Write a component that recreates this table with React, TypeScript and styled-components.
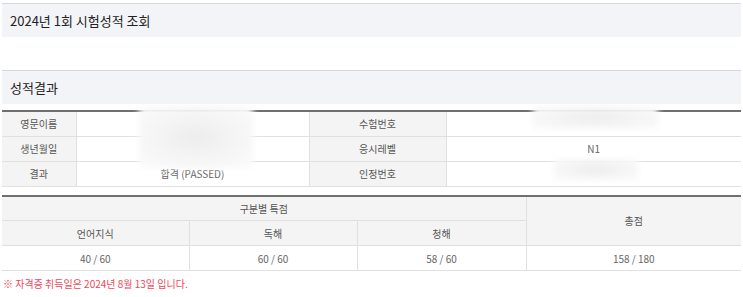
import React from "react";
import styled, { createGlobalStyle } from "styled-components";

const Global = createGlobalStyle`
  html, body { margin: 0; padding: 0; background: #fff; }
  body { font-family: "Noto Sans CJK KR", "Noto Sans", sans-serif; color: #333; }
  * { box-sizing: border-box; }
`;

const Page = styled.div`
  position: relative;
  padding: 3px 2px 0;
  width: 743px;
`;

const SectionTitle = styled.h2<{ $gap: number }>`
  margin: 0 0 ${(p) => p.$gap}px;
  height: 34px;
  display: flex;
  align-items: center;
  padding-left: 8px;
  background: #f3f4f8;
  border-top: 1px solid #d6d8de;
  font-size: 13px;
  font-weight: 400;
  color: #222;
`;

const Table = styled.table<{ $gap?: number }>`
  width: 100%;
  border-collapse: collapse;
  table-layout: fixed;
  border-top: 2px solid #6f6f6f;
  margin-bottom: ${(p) => p.$gap ?? 0}px;
  font-size: 10px;
  color: #666;
`;

const Row = styled.tr`
  height: 25px;
`;

const Th = styled.th`
  padding: 0;
  background: #f4f4f4;
  font-weight: 400;
  color: #555;
  border: 1px solid #e0e0e0;
  border-top: none;
  border-left: none;
  text-align: center;
  &:last-child { border-right: none; }
`;

const Td = styled.td`
  padding: 0;
  text-align: center;
  border-bottom: 1px solid #e0e0e0;
  border-right: 1px solid #e0e0e0;
  &:last-child { border-right: none; }
`;

const Note = styled.p`
  margin: 5px 0 0 1px;
  font-size: 10px;
  color: #f0465a;
`;

const Redaction = styled.div`
  position: absolute;
  background: radial-gradient(ellipse at center, #ececec 0%, #f4f4f4 45%, #fbfbfb 100%);
  filter: blur(3px);
`;

const infoRows = [
  ["영문이름", "", "수험번호", ""],
  ["생년월일", "", "응시레벨", "N1"],
  ["결과", "합격 (PASSED)", "인정번호", ""],
];

export default function App() {
  return (
    <>
      <Global />
      <Page>
        <SectionTitle $gap={33}>2024년 1회 시험성적 조회</SectionTitle>
        <SectionTitle $gap={6}>성적결과</SectionTitle>
        <Table $gap={8}>
          <colgroup>
            <col style={{ width: 74 }} />
            <col style={{ width: 233 }} />
            <col style={{ width: 137 }} />
            <col />
          </colgroup>
          <tbody>
            {infoRows.map((r) => (
              <Row key={r[0]}>
                <Th>{r[0]}</Th>
                <Td>{r[1]}</Td>
                <Th>{r[2]}</Th>
                <Td>{r[3]}</Td>
              </Row>
            ))}
          </tbody>
        </Table>
        <Table>
          <colgroup>
            <col style={{ width: 187 }} />
            <col style={{ width: 168 }} />
            <col style={{ width: 169 }} />
            <col />
          </colgroup>
          <thead>
            <Row>
              <Th colSpan={3}>구분별 특점</Th>
              <Th rowSpan={2}>총점</Th>
            </Row>
            <Row>
              <Th>언어지식</Th>
              <Th>독해</Th>
              <Th style={{ borderRight: "1px solid #e0e0e0" }}>청해</Th>
            </Row>
          </thead>
          <tbody>
            <Row>
              <Td>40 / 60</Td>
              <Td>60 / 60</Td>
              <Td>58 / 60</Td>
              <Td>158 / 180</Td>
            </Row>
          </tbody>
        </Table>
        <Note>※ 자격증 취득일은 2024년 8월 13일 입니다.</Note>
        <Redaction style={{ left: 139, top: 106, width: 114, height: 62 }} />
        <Redaction style={{ left: 533, top: 106, width: 125, height: 23 }} />
        <Redaction style={{ left: 554, top: 159, width: 84, height: 21 }} />
      </Page>
    </>
  );
}
